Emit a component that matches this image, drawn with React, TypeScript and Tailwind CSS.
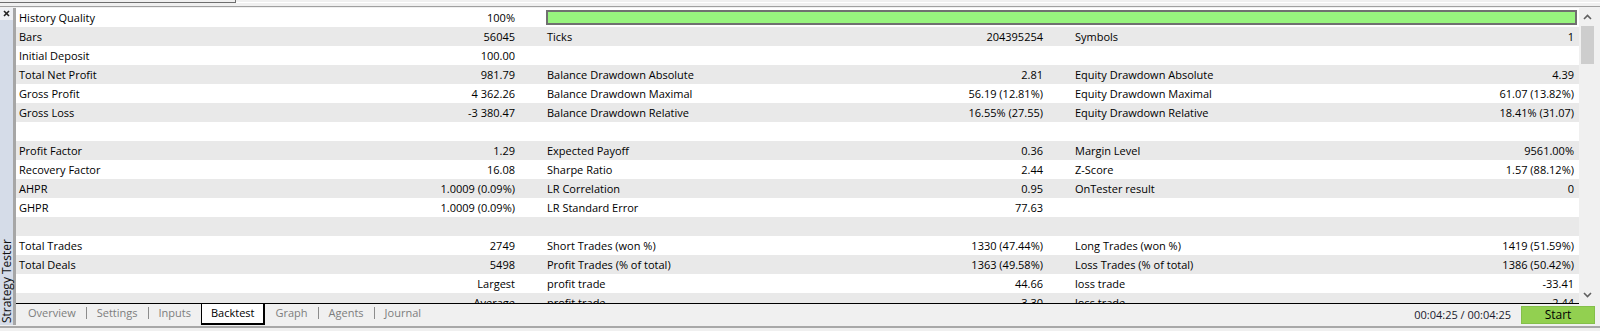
import React from "react";

type Row = [string, string, string, string, string, string];

const rows: Row[] = [
  ["History Quality", "100%", "", "", "", ""],
  ["Bars", "56045", "Ticks", "204395254", "Symbols", "1"],
  ["Initial Deposit", "100.00", "", "", "", ""],
  ["Total Net Profit", "981.79", "Balance Drawdown Absolute", "2.81", "Equity Drawdown Absolute", "4.39"],
  ["Gross Profit", "4 362.26", "Balance Drawdown Maximal", "56.19 (12.81%)", "Equity Drawdown Maximal", "61.07 (13.82%)"],
  ["Gross Loss", "-3 380.47", "Balance Drawdown Relative", "16.55% (27.55)", "Equity Drawdown Relative", "18.41% (31.07)"],
  ["", "", "", "", "", ""],
  ["Profit Factor", "1.29", "Expected Payoff", "0.36", "Margin Level", "9561.00%"],
  ["Recovery Factor", "16.08", "Sharpe Ratio", "2.44", "Z-Score", "1.57 (88.12%)"],
  ["AHPR", "1.0009 (0.09%)", "LR Correlation", "0.95", "OnTester result", "0"],
  ["GHPR", "1.0009 (0.09%)", "LR Standard Error", "77.63", "", ""],
  ["", "", "", "", "", ""],
  ["Total Trades", "2749", "Short Trades (won %)", "1330 (47.44%)", "Long Trades (won %)", "1419 (51.59%)"],
  ["Total Deals", "5498", "Profit Trades (% of total)", "1363 (49.58%)", "Loss Trades (% of total)", "1386 (50.42%)"],
  ["", "Largest", "profit trade", "44.66", "loss trade", "-33.41"],
  ["", "Average", "profit trade", "3.30", "loss trade", "-2.44"],
];

function Sep() {
  return <span className="mx-[10px] mt-[3px] h-[12px] w-px bg-[#8c8c8c]" />;
}

function Chevron({ down }: { down?: boolean }) {
  return (
    <svg width="9" height="6" viewBox="0 0 9 6">
      <polyline
        points={down ? "1,1 4.5,4.5 8,1" : "1,5 4.5,1.5 8,5"}
        fill="none"
        stroke="#606060"
        strokeWidth="1.6"
      />
    </svg>
  );
}

export default function App() {
  return (
    <div className="w-[1600px] h-[331px] overflow-hidden bg-[#f0f0f0] text-[11px] text-black font-['Open_Sans',sans-serif]">
      {/* top strip */}
      <div className="h-[8px]">
        <div className="flex h-[3px]">
          <div className="w-[236px] border-b border-r border-[#6e6e6e]" />
          <div className="flex-1 border-b border-white" />
        </div>
        <div className="mt-[3px] h-px bg-[#a0a0a0]" />
      </div>

      <div className="flex h-[317px]">
        {/* sidebar */}
        <div className="flex w-[16px]">
          <div className="flex w-[13px] flex-col bg-[#d5dce8]">
            <div className="flex h-[12px] justify-center bg-[#eef0f4] pt-[2px]">
              <svg width="7" height="7" viewBox="0 0 7 7">
                <line x1="1" y1="1" x2="6" y2="6" stroke="#222" strokeWidth="1.6" />
                <line x1="6" y1="1" x2="1" y2="6" stroke="#222" strokeWidth="1.6" />
              </svg>
            </div>
            <div className="mt-auto mb-[2px] flex justify-center">
              <div className="rotate-180 text-[12px] leading-[13px] text-[#111] [writing-mode:vertical-rl]">
                Strategy Tester
              </div>
            </div>
          </div>
          <div className="w-[3px] bg-[#a6a6a6]" />
        </div>

        {/* main */}
        <div className="flex flex-1 flex-col">
          <div className="flex h-[295px]">
            <div className="w-[1563px] overflow-hidden bg-white">
              {rows.map((r, i) => (
                <div
                  key={i}
                  className={`flex h-[19px] leading-[19px] whitespace-nowrap ${i % 2 === 0 ? "bg-white" : "bg-[#e9e9e9]"}`}
                >
                  <div className="w-[250px] pl-[3px]">{r[0]}</div>
                  <div className="w-[249px] text-right">{r[1]}</div>
                  {i === 0 ? (
                    <div className="ml-[31px] mr-[2px] mt-[2px] h-[15px] flex-1 border-2 border-[#707070] bg-[#98f47e]" />
                  ) : (
                    <>
                      <div className="w-[260px] pl-[32px]">{r[2]}</div>
                      <div className="w-[268px] text-right">{r[3]}</div>
                      <div className="w-[250px] pl-[32px]">{r[4]}</div>
                      <div className="flex-1 pr-[5px] text-right">{r[5]}</div>
                    </>
                  )}
                </div>
              ))}
            </div>
            {/* scrollbar */}
            <div className="flex w-[17px] flex-col bg-[#f0f0f0]">
              <div className="flex h-[18px] items-center justify-center">
                <Chevron />
              </div>
              <div className="mx-[2px] h-[38px] bg-[#cdcdcd]" />
              <div className="flex-1" />
              <div className="flex h-[17px] items-center justify-center">
                <Chevron down />
              </div>
            </div>
            <div className="flex-1" />
          </div>

          <div className="h-px w-[1563px] bg-black" />

          {/* tab bar */}
          <div className="flex h-[21px] items-start pl-[12px] whitespace-nowrap">
            <span className="leading-[18px] text-[#7d7d7d]">Overview</span>
            <Sep />
            <span className="leading-[18px] text-[#7d7d7d]">Settings</span>
            <Sep />
            <span className="leading-[18px] text-[#7d7d7d]">Inputs</span>
            <div className="ml-[10px] h-[21px] border-b-2 border-l border-r-2 border-black bg-white pl-[9px] pr-[8px] leading-[18px]">
              Backtest
            </div>
            <span className="ml-[11px] leading-[18px] text-[#7d7d7d]">Graph</span>
            <Sep />
            <span className="leading-[18px] text-[#7d7d7d]">Agents</span>
            <Sep />
            <span className="leading-[18px] text-[#7d7d7d]">Journal</span>

            <div className="ml-auto mr-[5px] mt-[2px] flex items-start">
              <span className="leading-[18px] text-[#1a1a2e]">00:04:25 / 00:04:25</span>
              <div className="ml-[10px] flex h-[18px] w-[74px] items-center justify-center border border-[#84bf4a] bg-[#92d050] text-[12px] leading-[16px]">
                Start
              </div>
            </div>
          </div>
        </div>
      </div>

      {/* bottom strip */}
      <div className="h-[6px] pt-[1px]">
        <div className="h-[2px] bg-[#a8a8a8]" />
      </div>
    </div>
  );
}
